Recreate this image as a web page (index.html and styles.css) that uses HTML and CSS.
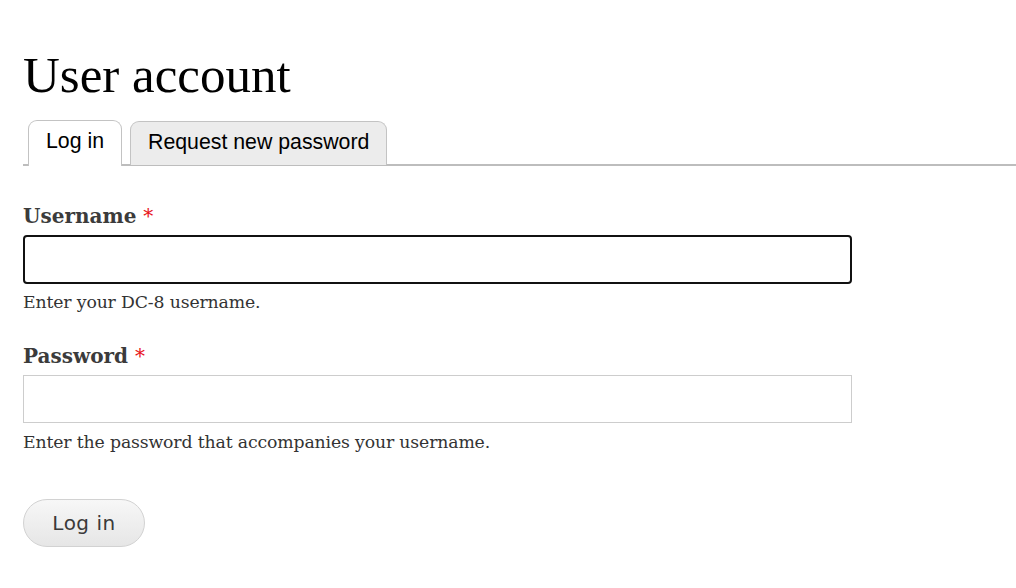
FILE: index.html
```html
<!DOCTYPE html>
<html lang="en">
<head>
<meta charset="utf-8">
<title>User account</title>
<link rel="stylesheet" href="styles.css">
</head>
<body>
<main class="page">
  <h1 class="title">User account</h1>
  <nav class="tabs">
    <a class="tab tab-active" href="#">Log in</a>
    <a class="tab" href="#">Request new password</a>
  </nav>
  <form class="login-form">
    <div class="field">
      <label class="label" for="name">Username <span class="req">*</span></label>
      <input class="input input-focus" id="name" type="text">
      <div class="desc">Enter your DC-8 username.</div>
    </div>
    <div class="field field-pass">
      <label class="label" for="pass">Password <span class="req">*</span></label>
      <input class="input" id="pass" type="password">
      <div class="desc">Enter the password that accompanies your username.</div>
    </div>
    <button class="button" type="button">Log in</button>
  </form>
</main>
</body>
</html>
```

FILE: styles.css
```css
html, body {
  margin: 0;
  padding: 0;
  background: #fff;
}

.page {
  padding: 0 0 0 23px;
}

.title {
  margin: 50px 0 0 0;
  font-family: "Liberation Serif", serif;
  font-weight: normal;
  font-size: 51px;
  line-height: 50px;
  color: #000;
}

.tabs {
  display: flex;
  align-items: flex-end;
  gap: 8px;
  margin-top: 21px;
  padding-left: 5px;
  border-bottom: 2px solid #bdbdbd;
  height: 43px;
}

.tab {
  display: block;
  box-sizing: border-box;
  height: 44px;
  margin-bottom: -1px;
  padding: 0 17px;
  border: 1px solid #c3c3c3;
  border-bottom: none;
  border-radius: 9px 9px 0 0;
  background: #ececec;
  color: #000;
  text-decoration: none;
  font-family: "Liberation Sans", Arial, sans-serif;
  font-size: 21.3px;
  line-height: 41px;
}

.tab-active {
  background: #fff;
  height: 46px;
  margin-bottom: -2px;
  padding-bottom: 2px;
}

.login-form {
  margin-top: 38px;
  font-family: "DejaVu Serif", serif;
  color: #3b3b3b;
}

.field {
  display: flex;
  flex-direction: column;
  align-items: flex-start;
}

.field-pass {
  margin-top: 30px;
}

.label {
  font-weight: bold;
  font-size: 20px;
  line-height: 24px;
  color: #3b3b3b;
}

.req {
  color: #e8141b;
  font-size: 20px;
  font-weight: normal;
}

.input {
  box-sizing: border-box;
  width: 829px;
  height: 48px;
  margin: 8px 0 0 0;
  padding: 0 8px;
  border: 1px solid #cdcdcd;
  border-radius: 0;
  background: #fff;
  font-family: "DejaVu Serif", serif;
  font-size: 17px;
  outline: none;
}

.input-focus {
  height: 49px;
  margin-top: 7px;
  border: 2px solid #111;
  border-radius: 4px;
}

.field-pass .input {
  margin-top: 7px;
}

.desc {
  margin-top: 6px;
  font-size: 17.3px;
  letter-spacing: -0.15px;
  line-height: 24px;
  color: #333;
}

.field-pass .desc {
  margin-top: 7px;
}

.button {
  display: block;
  box-sizing: border-box;
  width: 122px;
  height: 48px;
  margin-top: 45px;
  padding: 0;
  border: 1px solid #d2d2d2;
  border-radius: 24px;
  background: linear-gradient(to bottom, #f7f7f7, #e6e6e6);
  color: #3a3a3a;
  font-family: "DejaVu Sans", sans-serif;
  font-size: 20px;
  letter-spacing: 0.5px;
  cursor: pointer;
}
```
